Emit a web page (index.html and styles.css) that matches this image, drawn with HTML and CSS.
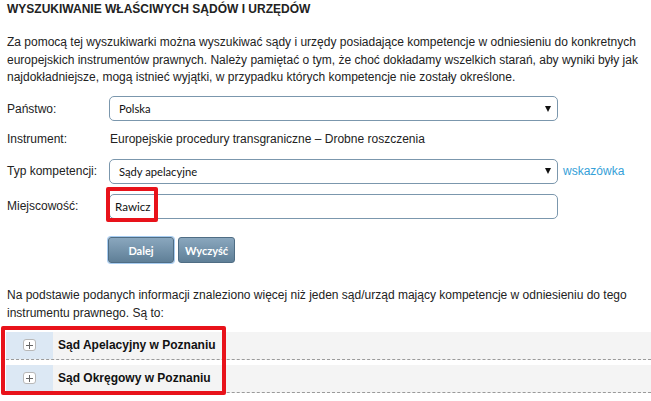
FILE: index.html
```html
<!DOCTYPE html>
<html lang="pl">
<head>
<meta charset="utf-8">
<title>Wyszukiwanie właściwych sądów i urzędów</title>
<link rel="stylesheet" href="styles.css">
</head>
<body>
<div class="page">
  <h1 class="title">WYSZUKIWANIE WŁAŚCIWYCH SĄDÓW I URZĘDÓW</h1>
  <p class="intro">Za pomocą tej wyszukiwarki można wyszukiwać sądy i urzędy posiadające kompetencje w odniesieniu do konkretnych europejskich instrumentów prawnych. Należy pamiętać o tym, że choć dokładamy wszelkich starań, aby wyniki były jak najdokładniejsze, mogą istnieć wyjątki, w przypadku których kompetencje nie zostały określone.</p>

  <div class="form">
    <div class="row">
      <div class="label">Państwo:</div>
      <div class="select"><span class="select-text">Polska</span><span class="arrow"></span></div>
    </div>
    <div class="row row-text">
      <div class="label">Instrument:</div>
      <div class="value">Europejskie procedury transgraniczne – Drobne roszczenia</div>
    </div>
    <div class="row">
      <div class="label">Typ kompetencji:</div>
      <div class="select"><span class="select-text">Sądy apelacyjne</span><span class="arrow"></span></div>
      <a class="hint" href="#">wskazówka</a>
    </div>
    <div class="row">
      <div class="label">Miejscowość:</div>
      <div class="input-wrap">
        <div class="input">Rawicz</div>
        <div class="highlight highlight-input"></div>
      </div>
    </div>
    <div class="buttons">
      <button class="btn btn-focus">Dalej</button>
      <button class="btn">Wyczyść</button>
    </div>
  </div>

  <p class="found">Na podstawie podanych informacji znaleziono więcej niż jeden sąd/urząd mający kompetencje w odniesieniu do tego instrumentu prawnego. Są to:</p>

  <div class="results">
    <div class="result">
      <div class="toggle"><span class="plus"></span></div>
      <div class="result-name">Sąd Apelacyjny w Poznaniu</div>
    </div>
    <div class="result">
      <div class="toggle"><span class="plus"></span></div>
      <div class="result-name">Sąd Okręgowy w Poznaniu</div>
    </div>
    <div class="highlight highlight-results"></div>
  </div>
</div>
</body>
</html>
```

FILE: styles.css
```css
html, body {
  margin: 0;
  padding: 0;
  background: #ffffff;
  overflow: hidden;
}

body {
  font-family: "Liberation Sans", Arial, sans-serif;
  font-size: 12px;
  color: #222222;
}

.page {
  padding: 1px 7px 0 7px;
}

.title {
  margin: 0;
  font-size: 12px;
  line-height: 16px;
  font-weight: bold;
  color: #222222;
}

.intro {
  margin: 17px 0 0 0;
  line-height: 17.5px;
}

.form {
  margin-top: 9.5px;
  display: flex;
  flex-direction: column;
  gap: 10px;
}

.row {
  display: flex;
  align-items: center;
  height: 25px;
}

.row-text {
  height: 17.5px;
  line-height: 17.5px;
}

.label {
  width: 102px;
  flex: none;
}

.value {
  padding-left: 1px;
}

.select {
  box-sizing: border-box;
  width: 449px;
  height: 25px;
  border: 1px solid #7b97ad;
  border-radius: 5px;
  display: flex;
  align-items: center;
  justify-content: space-between;
  padding: 0 6px 0 9px;
  background: #ffffff;
}

.select-text {
  font-family: Lato, "Open Sans", sans-serif;
  font-size: 11.2px;
  color: #111111;
}

.arrow {
  width: 0;
  height: 0;
  border-left: 3px solid transparent;
  border-right: 3px solid transparent;
  border-top: 6px solid #111111;
}

.hint {
  margin-left: 5px;
  color: #35a0d8;
  text-decoration: none;
}

.input-wrap {
  position: relative;
}

.input {
  box-sizing: border-box;
  width: 449px;
  height: 25px;
  border: 1px solid #7b97ad;
  border-radius: 5px;
  padding: 0 5px;
  display: flex;
  align-items: center;
  font-family: Lato, "Open Sans", sans-serif;
  font-size: 11.6px;
  color: #111111;
}

.highlight {
  position: absolute;
  box-sizing: border-box;
  border: 4px solid #e8121a;
  border-radius: 2px;
}

.highlight-input {
  left: -3px;
  top: -6.5px;
  width: 52px;
  height: 35px;
}

.buttons {
  display: flex;
  gap: 4px;
  margin-top: 8.5px;
  padding-left: 101px;
}

.btn {
  box-sizing: border-box;
  height: 26px;
  padding: 0;
  border: 1px solid #4f6d84;
  border-radius: 3px;
  background: linear-gradient(#8aa7be, #5f7f97);
  color: #ffffff;
  font-family: Lato, "Open Sans", sans-serif;
  font-weight: bold;
  font-size: 11px;
  width: 57px;
}

.btn-focus {
  width: 66px;
  box-shadow: 0 0 0 1px #a8cdf2;
}

.found {
  margin: 24px 0 0 0;
  line-height: 17.5px;
}

.results {
  position: relative;
  margin: 9.5px -7px 0 -1px;
}

.result {
  display: flex;
  height: 27px;
  background: #f4f4f4;
  border-bottom: 1px dashed #9a9a9a;
  margin-bottom: 5px;
}

.toggle {
  width: 47px;
  flex: none;
  background: #dce8f4;
  display: flex;
  align-items: center;
  justify-content: center;
}

.plus {
  position: relative;
  box-sizing: border-box;
  width: 13px;
  height: 12px;
  border: 1px solid #b8b8b8;
  border-radius: 3px;
  background: #ffffff;
}

.plus::before,
.plus::after {
  content: "";
  position: absolute;
  background: #666666;
}

.plus::before {
  left: 2px;
  top: 4.5px;
  width: 7px;
  height: 1px;
}

.plus::after {
  left: 5px;
  top: 1.5px;
  width: 1px;
  height: 7px;
}

.result-name {
  padding-left: 5px;
  display: flex;
  align-items: center;
  font-weight: bold;
  font-size: 12px;
  color: #111111;
}

.highlight-results {
  left: -5px;
  top: -6px;
  width: 225px;
  height: 69px;
}
```
